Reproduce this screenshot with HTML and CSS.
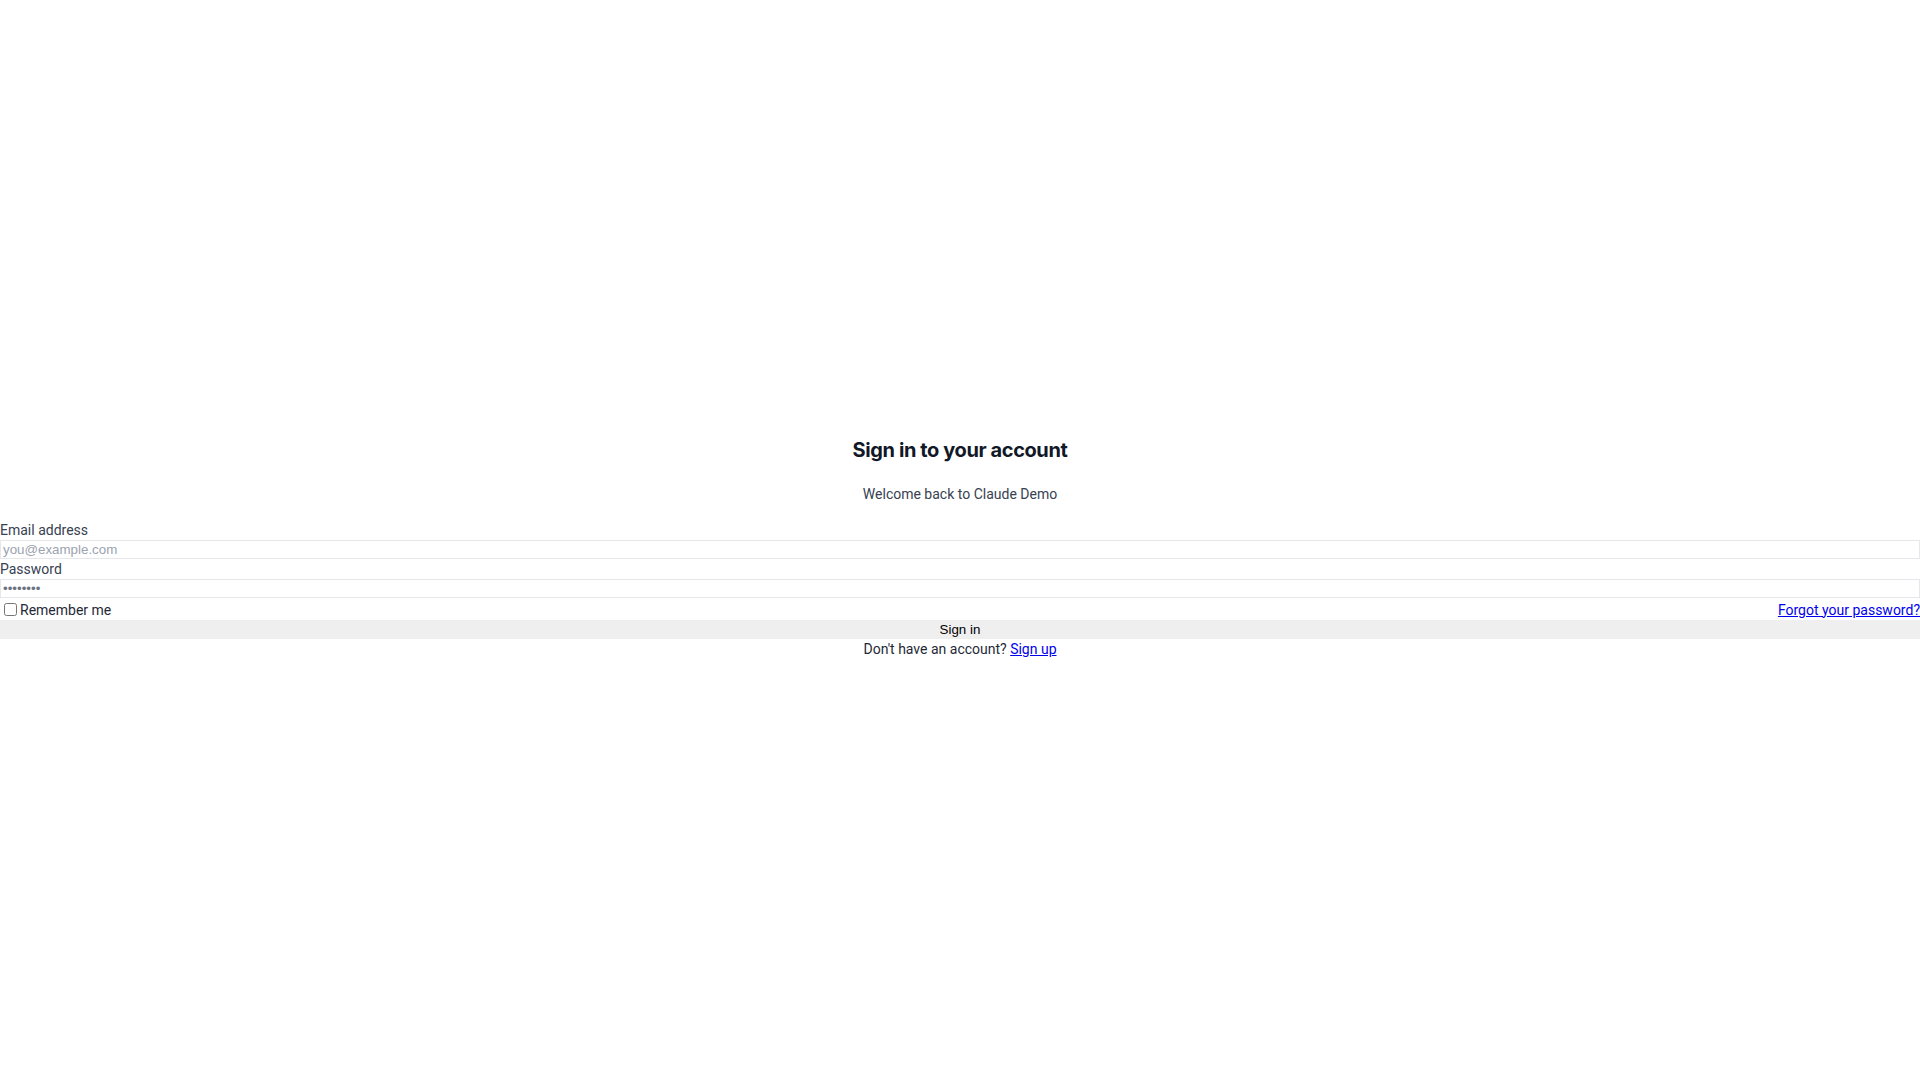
FILE: index.html
```html
<!DOCTYPE html>
<html lang="en">
<head>
<meta charset="utf-8">
<title>Sign in</title>
<link rel="stylesheet" href="styles.css">
</head>
<body>
<main class="page">
  <div class="header">
    <h2 class="title">Sign in to your account</h2>
    <p class="subtitle">Welcome back to Claude Demo</p>
  </div>
  <form class="form">
    <label class="label" for="email">Email address</label>
    <input class="field" id="email" type="email" placeholder="you@example.com">
    <label class="label" for="password">Password</label>
    <input class="field field-secret" id="password" type="password" value="password">
    <div class="row">
      <label class="remember"><input class="check" type="checkbox">Remember me</label>
      <a class="link" href="#">Forgot your password?</a>
    </div>
    <button class="submit" type="button">Sign in</button>
    <p class="signup">Don't have an account? <a class="link" href="#">Sign up</a></p>
  </form>
</main>
</body>
</html>
```
FILE: styles.css
```css
*, *::before, *::after {
  box-sizing: border-box;
}
html, body {
  margin: 0;
  padding: 0;
  background: #ffffff;
}
body {
  font-family: Roboto, "Liberation Sans", Arial, sans-serif;
  font-size: 14px;
  line-height: 20px;
  color: #1f2937;
}
.page {
  min-height: 100vh;
  display: flex;
  flex-direction: column;
  justify-content: center;
  padding-top: 15px;
}
.header {
  text-align: center;
}
.title {
  margin: 0;
  font-family: Inter, Roboto, sans-serif;
  font-size: 20px;
  line-height: 28px;
  font-weight: 700;
  letter-spacing: -0.4px;
  color: #111827;
}
.subtitle {
  margin: 20px 0 0;
  font-size: 14px;
  line-height: 20px;
  color: #374151;
}
.form {
  margin-top: 16px;
  display: flex;
  flex-direction: column;
}
.label {
  display: block;
  color: #374151;
  font-size: 14px;
  line-height: 20px;
}
.field {
  display: block;
  width: 100%;
  height: 19px;
  margin: 0;
  padding: 1px 2px;
  border: 1px solid #e5e7eb;
  font-family: "Liberation Sans", Arial, sans-serif;
  font-size: 13.333px;
  color: #000;
  background: #fff;
  outline: none;
}
.field-secret {
  color: #6b7280;
}
.field::placeholder {
  color: #9ca3af;
}
.row {
  display: flex;
  justify-content: space-between;
  align-items: center;
  height: 22px;
  padding-top: 1px;
}
.remember {
  display: flex;
  align-items: center;
  color: #1f2937;
}
.check {
  width: 13px;
  height: 13px;
  margin: 0 3px 0 4px;
}
.link {
  color: #0000ee;
  text-decoration: underline;
}
.submit {
  display: block;
  width: 100%;
  height: 19px;
  margin: 0;
  padding: 0 6px;
  border: 0;
  background: #efefef;
  font-family: "Liberation Sans", Arial, sans-serif;
  font-size: 13.333px;
  line-height: 19px;
  color: #000;
}
.signup {
  margin: 0;
  text-align: center;
  color: #1f2937;
}
```
